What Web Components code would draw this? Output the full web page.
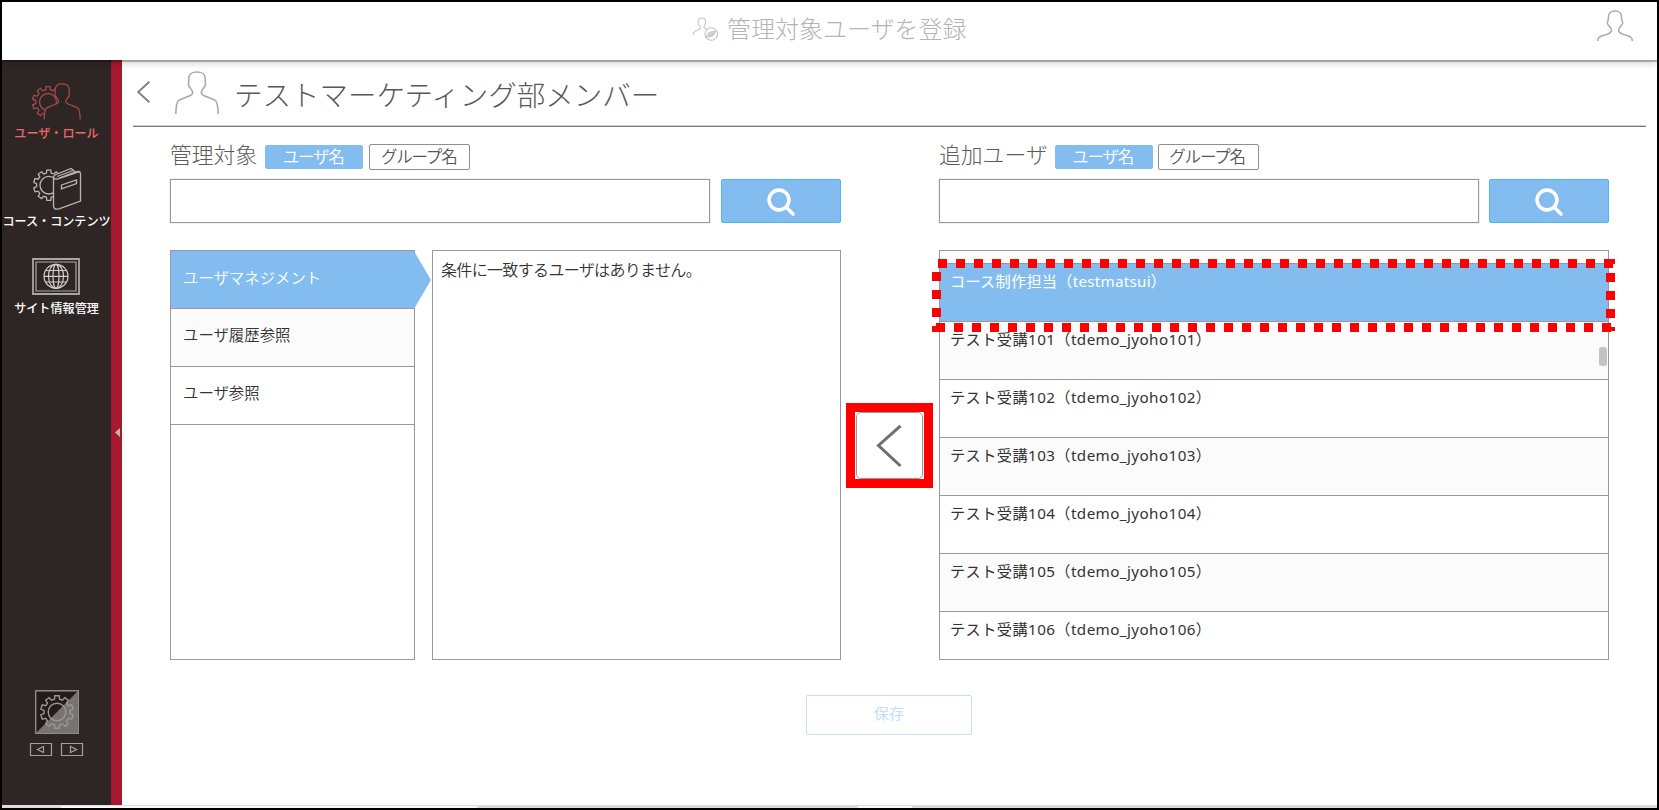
<!DOCTYPE html>
<html lang="ja">
<head>
<meta charset="utf-8">
<title>管理対象ユーザを登録</title>
<style>
html,body{margin:0;padding:0}
body{width:1659px;height:810px;overflow:hidden;background:#fff;font-family:"Noto Sans","Noto Sans CJK JP",sans-serif;color:#333}
</style>
</head>
<body>
<admin-app></admin-app>
<script>
const define = (name, html) => customElements.define(name, class extends HTMLElement {
  constructor() {
    super();
    const t = document.createElement('template');
    t.innerHTML = '<style>*{box-sizing:border-box}svg{display:block;overflow:visible}</style>' + html;
    this.attachShadow({ mode: 'open' }).append(t.content.cloneNode(true));
  }
});

// Outline of a cog with n square teeth
function gear(cx, cy, ro, ri, n) {
  const p = [];
  for (let i = 0; i < n; i++) {
    const a = (i + .5) * 2 * Math.PI / n, w = Math.PI / n;
    [[-.62, ri], [-.42, ro], [.42, ro], [.62, ri]].forEach(([k, r]) =>
      p.push((cx + r * Math.cos(a + k * w)).toFixed(2) + ' ' + (cy + r * Math.sin(a + k * w)).toFixed(2)));
  }
  return 'M' + p.join('L') + 'Z';
}
const person = 'M.8 43C1 36 1.8 31 3.6 29.5C6 27.5 14 26 17 23.4C18.6 21.6 17.2 19.3 15.6 17.4C14.4 16 13 14.6 13.4 12.4C14.2 11 13.6 9 13.8 7C14.2 2.5 16.5 1 22 1S29.8 2.5 30.2 7C30.4 9 29.8 11 30.6 12.4C31 14.6 29.6 16 28.4 17.4C26.8 19.3 25.4 21.6 27 23.4C30 26 38 27.5 40.4 29.5C42.2 31 43 36 43.2 43';

define('top-bar', `<style>
:host{display:flex;position:relative;z-index:3;height:58px;background:#fff;box-shadow:0 2px 0 #00000040,0 3px 7px 0 #0003}
h1{margin:0 0 0 9px;font-size:24px;font-weight:300;line-height:32px;color:#b4b4b4;padding-top:11px}
.i{margin:15px 0 0 690px}.u{margin:8px 24px 0 auto}
</style>
<svg class="i" width="26" height="24" viewBox="0 0 26 24" fill="none" stroke="#c4c4c4" stroke-width="1.1"><path d="M1 18C2 12 7 14 8.500 11C9 9.500 6 8 6 5.500C6 2 7.500 1 10 1S14 2 13.500 6C13 8.500 11.500 9 12 10.500C13 12 14 12 15 12"/><circle cx="19.300" cy="17" r="6.300"/><path d="M14.500 20Q15 14 23.500 14.500Q22 20 14.500 20M16 19L22 15.500"/><circle cx="19" cy="17" r="1.500"/></svg>
<h1><slot></slot></h1>
<svg class="u" width="36" height="31" viewBox="0 0 36 31" fill="none" stroke="#aaa" stroke-width="1.500"><path d="M.7 31C.7 27.500 2 26.800 6 25.500C12 23.800 15 22.500 14.500 19.800C14 17.500 12 16.500 10.300 13.500C10 12 11.400 11.500 11.400 8C11.400 3 13 1 18 1S24.600 3 24.600 8C24.600 11.500 26 12 25.700 13.500C24 16.500 22 17.500 21.500 19.800C21 22.500 24 23.800 30 25.500C34 26.800 35.300 27.500 35.300 31"/></svg>`);

define('nav-item', `<style>
:host{display:flex;flex-direction:column;align-items:center;color:#fff;font-size:12.1px;font-weight:500;line-height:16px;white-space:nowrap}
:host([active]){color:#f0666c}
span{margin-top:var(--gap,3px)}
</style><slot name="icon"></slot><span><slot></slot></span>`);

define('side-bar', `<style>
:host{display:flex;flex-direction:column;align-items:center;width:109px;background:#2e2624;padding-top:23px;flex:none}
nav-item{margin-bottom:25px}nav-item.b{margin-bottom:28px}
.set{margin-top:348px}.p{display:flex;gap:9px;margin-top:9px}
</style>
<nav-item active style="--gap:6px"><svg slot="icon" width="49" height="37" fill="#2e2624" stroke="#a5494d" stroke-width="1.3"><path d="${gear(16, 19, 15.6, 12.3, 10)}"/><circle cx="16" cy="19" r="8.500"/><path transform="translate(11.500 0) scale(.85)" stroke-width="1.500" d="${person}"/></svg>ユーザ・ロール</nav-item>
<nav-item class="b" style="--gap:4px"><svg slot="icon" width="48" height="43" fill="#2e2624" stroke="#b9b5b4" stroke-width="1.3"><path d="${gear(15.8, 18.2, 15.3, 12.3, 10)}"/><circle cx="15.800" cy="18.200" r="8.800"/><path d="M20.500 11Q20 9 23 7.500L38 1.500L40 3L42 5L45.500 4.500Q47.500 4.500 47.500 7V34L26 41.800Q20.500 43 20.500 38.500Z"/><path fill="none" d="M21 10.500Q21 12.500 24 12L46 5M24 9.500L40 3.500M26 11L42 5M28.500 18L43.500 12.800V16.500L28.500 21.800Z"/></svg>コース・コンテンツ</nav-item>
<nav-item style="--gap:6px"><svg slot="icon" width="48" height="37" fill="none" stroke="#aaa6a5" stroke-width="1.2"><path stroke-width="1.800" d="M1 1H47V36H1Z"/><path d="M4 4H44V33H4Z"/><g stroke="#d0cdcc"><circle cx="24" cy="18.300" r="12"/><ellipse cx="24" cy="18.300" rx="7.500" ry="12"/><ellipse cx="24" cy="18.300" rx="3" ry="12"/><path d="M12 18.300H36M13.500 12.500H34.500M13.500 24H34.500"/></g></svg>サイト情報管理</nav-item>
<svg class="set" width="44" height="44" fill="none"><path fill="#221b19" stroke="#8d8a89" stroke-width="1.400" d="M.7 .7H43.300V43.300H.7Z"/><path fill="#777373" d="M43 1V43H1Z"/><g stroke="#9a9796" stroke-width="1.400"><path d="${gear(22, 22, 16.4, 13, 10)}"/><circle cx="22" cy="22" r="8.800"/></g></svg>
<div class="p"><svg width="22" height="13" fill="none" stroke="#a3a09f" stroke-width="1.200"><path d="M.5 .5H21.500V12.500H.5ZM13.500 3.500V9.500L7.500 6.500Z"/></svg><svg width="22" height="13" fill="none" stroke="#a3a09f" stroke-width="1.200"><path d="M.5 .5H21.500V12.500H.5ZM9.500 3.500V9.500L15.500 6.500Z"/></svg></div>`);

define('side-grip', `<style>:host{display:flex;flex:none;width:11px;background:#a6192e;padding:368px 0 0 4px}</style>
<svg width="5" height="9"><path fill="#c0b5b5" d="M5 0V9L0 4.500Z"/></svg>`);

define('page-title', `<style>
:host{display:flex;height:67px;margin:0 11px;padding-left:4px;border-bottom:1px solid #7c7c7c;box-shadow:inset 0 -1px #cecece}
.c{margin:21px 25px 0 0}.p{margin:11px 0 0}
h2{margin:15px 0 0 15px;font-size:28.5px;line-height:40px;font-weight:300;color:#585858}
</style>
<svg class="c" width="13" height="22" fill="none" stroke="#808080" stroke-width="1.900"><path d="M12.300 .7L1.200 11L12.300 21.300"/></svg>
<svg class="p" width="44" height="44" fill="none" stroke="#aaa" stroke-width="1.600"><path d="${person}"/></svg>
<h2><slot></slot></h2>`);

define('toggle-chip', `<style>
:host{display:flex;justify-content:center;width:101px;height:26px;border:1px solid #8f8f8f;border-radius:2px;font-size:16.500px;letter-spacing:-1.200px;line-height:23px;color:#555;background:#fff;font-weight:350;padding-right:2px}
:host([on]){width:98px;height:24px;background:#83bdf0;border-color:#83bdf0;color:#fff;margin-right:var(--chip-gap,6px);line-height:21px}
</style><slot></slot>`);

define('search-box', `<style>
:host{display:flex;justify-content:space-between;height:44px}
.f{width:540px;border:1px solid #999;background:#fff;box-shadow:0 0 1px #aaa}
.b{width:120px;background:#83bdf0;border:1px solid #4cb8ee;border-radius:2px;padding:8px 0 0 45px}
</style><div class="f"></div><div class="b"><svg width="29" height="29" fill="none" stroke="#fff" stroke-width="3.600" stroke-linecap="round"><circle cx="12" cy="12" r="9.900"/><path d="M19 19L26 26"/></svg></div>`);

define('user-picker', `<style>
:host{display:flex;flex-direction:column;padding-top:16px}
.h{display:flex;align-items:center;height:28px;margin-bottom:8px}
h3{margin:0 var(--label-gap,7px) 4px 0;font-size:21.800px;line-height:24px;font-weight:300;color:#5c5c5c;white-space:nowrap}
.body{display:flex;justify-content:space-between;height:410px;margin-top:27px}
</style>
<div class="h"><h3><slot name="label"></slot></h3><toggle-chip on>ユーザ名</toggle-chip><toggle-chip>グループ名</toggle-chip></div>
<search-box></search-box>
<div class="body"><slot></slot></div>`);

define('role-row', `<style>
:host{display:flex;align-items:center;position:relative;height:58px;border-bottom:1px solid #999;padding:0 0 3px 12px;font-size:15.400px;line-height:20px;font-weight:350}
:host([alt]){background:#fbfbfb}
:host([on]){background:#83bdf0;color:#fff;padding-bottom:2px}
svg{display:none;position:absolute;left:100%;top:0}
:host([on]) svg{display:block}
</style><slot></slot><svg width="17" height="58"><path fill="#83bdf0" d="M0 0L17 29L0 58Z"/></svg>`);

define('role-list', `<style>:host{display:block;width:245px;height:410px;border:1px solid #999}</style><slot></slot>`);
define('member-box', `<style>:host{display:block;width:409px;height:410px;border:1px solid #999;padding:8px 0 0 8px;font-size:16px;letter-spacing:-.660px;line-height:22px;font-weight:350}</style><slot></slot>`);

define('user-row', `<style>
:host{display:block;height:58px;border-bottom:1px solid #999;padding:7px 0 0 10px;font-size:15.200px;letter-spacing:.42px;line-height:20px;white-space:nowrap;font-weight:400}
:host([alt]){background:#fbfbfb}
:host([on]){background:#83bdf0;color:#fff;letter-spacing:.25px}
:host([cut]){height:13px;padding:0}
</style><slot></slot>`);

define('user-list', `<style>
:host{display:block;position:relative;width:670px;height:410px;border:1px solid #999}
.v{height:408px;overflow:hidden}
i{position:absolute;right:1px;top:96px;width:8px;height:19px;border-radius:3px;background:#c3c3c3}
svg{position:absolute;left:-8px;top:8px}
</style><div class="v"><slot></slot></div><i></i>
<svg width="684" height="73" fill="none" stroke="#f00" stroke-width="9"><path stroke-dasharray="9 9" d="M6 4.500H684M4.500 13V72M4 68.500H681M678.500 14V72"/><path fill="#f00" stroke="none" d="M0 68H13V73H0ZM675 0H683V5H675Z"/></svg>`);

define('move-left', `<style>
:host{display:block;width:87px;height:85px;border:9px solid #f00;padding:0 1px}
div{width:67px;height:67px;border:1px solid #999;border-radius:5px;padding:12px 0 0 20px}
</style><div><svg width="25" height="42" fill="none" stroke="#6f6f6f" stroke-width="3"><path d="M23.500 .8L1.500 20.500L23.500 41"/></svg></div>`);

define('save-button', `<style>
:host{display:flex;justify-content:center;width:166px;height:40px;margin:35px 0 0 684px;border:1px solid #c5def4;border-radius:2px;color:#c5def4;font-size:15.200px;line-height:35px;font-weight:400}
</style><slot></slot>`);

define('admin-app', `<style>
:host{display:flex;flex-direction:column;width:1659px;height:810px;border:2px solid #000;box-sizing:border-box;background:#fff}
.w{display:flex;height:745px}
main{flex:1}
.g{display:grid;grid-template-columns:671px 98px 670px;padding-left:48px}
move-left{margin:276px 0 0 5px}
.foot{display:flex;height:3px;background:#dcdcdc}
.foot i{height:2px;margin-top:1px;background:#fafafa}
.foot .t{width:416px;margin-left:59px}
.foot .m{width:54px;margin-left:381px}
</style>
<top-bar>管理対象ユーザを登録</top-bar>
<div class="w"><side-bar></side-bar><side-grip></side-grip>
<main><page-title>テストマーケティング部メンバー</page-title>
<div class="g">
<user-picker style="--label-gap:8px"><span slot="label">管理対象</span>
<role-list><role-row on>ユーザマネジメント</role-row><role-row alt>ユーザ履歴参照</role-row><role-row>ユーザ参照</role-row></role-list>
<member-box>条件に一致するユーザはありません。</member-box></user-picker>
<move-left></move-left>
<user-picker style="--chip-gap:5px"><span slot="label">追加ユーザ</span>
<user-list><user-row cut alt></user-row><user-row on>コース制作担当（testmatsui）</user-row><user-row alt>テスト受講101（tdemo_jyoho101）</user-row><user-row>テスト受講102（tdemo_jyoho102）</user-row><user-row alt>テスト受講103（tdemo_jyoho103）</user-row><user-row>テスト受講104（tdemo_jyoho104）</user-row><user-row alt>テスト受講105（tdemo_jyoho105）</user-row><user-row>テスト受講106（tdemo_jyoho106）</user-row></user-list></user-picker>
</div><save-button>保存</save-button></main></div>
<div class="foot"><i class="t"></i><i class="m"></i></div>`);
</script>
</body>
</html>
